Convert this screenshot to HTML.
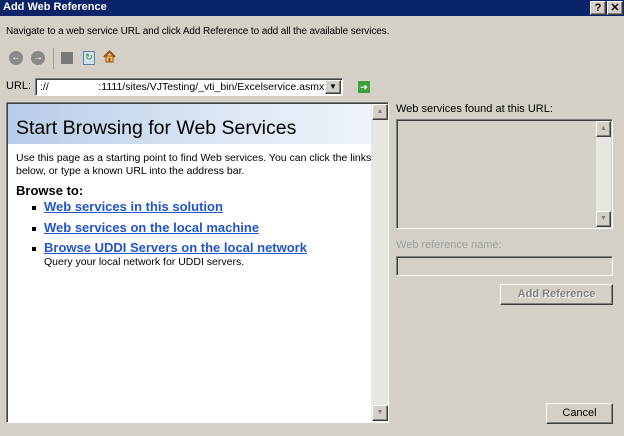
<!DOCTYPE html>
<html><head><style>
*{margin:0;padding:0;box-sizing:border-box}
body{width:624px;height:436px;background:#d4d0c8;font-family:"Liberation Sans",sans-serif;font-size:11px;position:relative;overflow:hidden;color:#000}
.a{position:absolute;white-space:nowrap}
.sunk{border:1px solid;border-color:#808080 #fff #fff #808080;box-shadow:inset 1px 1px 0 #404040}
.btn{border:1px solid;border-color:#fff #404040 #404040 #fff;box-shadow:inset -1px -1px 0 #808080;background:#d4d0c8;text-align:center}
.sb{background:#e8e6e0}
.arr{width:16px;height:16px;font-size:7px;line-height:14px;color:#808080}
a{color:#2255cc;font-weight:bold;font-size:13px;text-decoration:underline}
</style></head><body>
<div class="a" style="left:0;top:0;width:624px;height:16px;background:#0a246a"></div>
<div class="a" style="left:3px;top:1px;color:#fff;font-weight:bold;font-size:11px">Add Web Reference</div>
<div class="a btn" style="left:590px;top:1px;width:16px;height:14px;font-weight:bold;line-height:12px">?</div>
<div class="a btn" style="left:607px;top:1px;width:16px;height:14px;font-weight:bold;line-height:12px">✕</div>
<div class="a" style="left:6px;top:26px;font-size:10px;letter-spacing:-0.1px">Navigate to a web service URL and click Add Reference to add all the available services.</div>
<div class="a" style="left:9px;top:51px;width:14px;height:14px;border-radius:7px;background:#8a8a8a;color:#fff;font-size:10px;line-height:14px;text-align:center">←</div>
<div class="a" style="left:31px;top:51px;width:14px;height:14px;border-radius:7px;background:#8a8a8a;color:#fff;font-size:10px;line-height:14px;text-align:center">→</div>
<div class="a" style="left:53px;top:48px;width:1px;height:21px;background:#a0a0a0"></div>
<div class="a" style="left:61px;top:52px;width:12px;height:12px;background:#7a7a7a"></div>
<div class="a" style="left:83px;top:51px;width:12px;height:14px;background:#cfe0f0;border:1px solid #6080a0;color:#2a8a2a;font-size:9px;line-height:11px;text-align:center">↻</div>
<div class="a" style="left:103px;top:50px;width:13px;height:13px"><svg width="13" height="13"><path d="M1 7L6.5 1.5L12 7" stroke="#a05010" stroke-width="2" fill="none"/><rect x="3" y="6" width="7" height="6" fill="#f0c060" stroke="#a05010"/><rect x="5.5" y="8" width="2" height="4" fill="#a05010"/></svg></div>
<div class="a" style="left:6px;top:80px">URL:</div>
<div class="a sunk" style="left:35px;top:78px;width:308px;height:18px;background:#fff;overflow:hidden"></div>
<div class="a" style="left:40px;top:81px;font-size:10.5px;width:284px;overflow:hidden">:// &nbsp; &nbsp; &nbsp; &nbsp; &nbsp; &nbsp; &nbsp; &nbsp; :1111/sites/VJTesting/_vti_bin/Excelservice.asmx</div>
<div class="a btn" style="left:325px;top:80px;width:16px;height:14px;font-size:8px;line-height:12px">▼</div>
<div class="a" style="left:358px;top:81px;width:12px;height:12px;background:#40a040;color:#fff;font-size:9px;line-height:12px;text-align:center">➔</div>
<div class="a sunk" style="left:6px;top:102px;width:383px;height:321px;background:#fff"></div>
<div class="a" style="left:8px;top:104px;width:363px;height:40px;background:linear-gradient(90deg,#b8cce8,#dde7f5 60%,#eef3fa)"></div>
<div class="a" style="left:16px;top:117px;font-size:19.5px">Start Browsing for Web Services</div>
<div class="a" style="left:16px;top:152px;font-size:10.5px;line-height:13px;white-space:normal;width:362px">Use this page as a starting point to find Web services. You can click the links below, or type a known URL into the address bar.</div>
<div class="a" style="left:16px;top:183px;font-size:13px;font-weight:bold">Browse to:</div>
<div class="a" style="left:32px;top:206px;width:4px;height:4px;background:#000"></div>
<div class="a" style="left:44px;top:199px"><a>Web services in this solution</a></div>
<div class="a" style="left:32px;top:227px;width:4px;height:4px;background:#000"></div>
<div class="a" style="left:44px;top:220px"><a>Web services on the local machine</a></div>
<div class="a" style="left:32px;top:247px;width:4px;height:4px;background:#000"></div>
<div class="a" style="left:44px;top:240px"><a>Browse UDDI Servers on the local network</a></div>
<div class="a" style="left:44px;top:256px;font-size:10.5px">Query your local network for UDDI servers.</div>
<div class="a sb" style="left:371px;top:104px;width:17px;height:318px"></div>
<div class="a btn arr" style="left:372px;top:104px">▲</div>
<div class="a btn arr" style="left:372px;top:405px">▼</div>
<div class="a" style="left:396px;top:103px">Web services found at this URL:</div>
<div class="a sunk" style="left:396px;top:119px;width:217px;height:110px;background:#d4d0c8"></div>
<div class="a sb" style="left:596px;top:121px;width:15px;height:106px"></div>
<div class="a btn arr" style="left:596px;top:121px;width:15px">▲</div>
<div class="a btn arr" style="left:596px;top:211px;width:15px">▼</div>
<div class="a" style="left:396px;top:239px;color:#a0a0a0">Web reference name:</div>
<div class="a sunk" style="left:396px;top:256px;width:217px;height:20px"></div>
<div class="a btn" style="left:500px;top:284px;width:113px;height:21px;line-height:19px;color:#808080;font-weight:bold;text-shadow:1px 1px 0 #fff">Add Reference</div>
<div class="a btn" style="left:546px;top:403px;width:67px;height:21px;line-height:19px">Cancel</div>
</body></html>
